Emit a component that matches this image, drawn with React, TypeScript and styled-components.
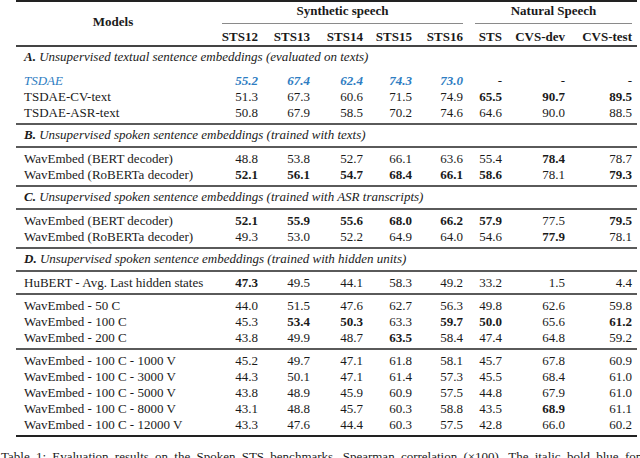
import styled, { createGlobalStyle } from 'styled-components';

const GlobalStyle = createGlobalStyle`
  html, body {
    margin: 0;
    padding: 0;
    background: #fff;
  }
  body {
    font-family: "Liberation Serif", "Times New Roman", serif;
    font-size: 13px;
    line-height: 16px;
    color: #1a1a1a;
  }
`;

const COLS = '194px 53px 52px 53px 49px 51px 39px 63px 67px';

type Row = { name: string; vals: string[]; bold?: number[]; top?: boolean };
type Section = { tag: string; title: string; plain?: boolean; groups: Row[][] };

const heads = ['STS12', 'STS13', 'STS14', 'STS15', 'STS16', 'STS', 'CVS-dev', 'CVS-test'];

const sections: Section[] = [
  {
    tag: 'A.',
    title: 'Unsupervised textual sentence embeddings (evaluated on texts)',
    plain: true,
    groups: [
      [
        { name: 'TSDAE', vals: ['55.2', '67.4', '62.4', '74.3', '73.0', '-', '-', '-'], top: true },
        { name: 'TSDAE-CV-text', vals: ['51.3', '67.3', '60.6', '71.5', '74.9', '65.5', '90.7', '89.5'], bold: [5, 6, 7] },
        { name: 'TSDAE-ASR-text', vals: ['50.8', '67.9', '58.5', '70.2', '74.6', '64.6', '90.0', '88.5'] },
      ],
    ],
  },
  {
    tag: 'B.',
    title: 'Unsupervised spoken sentence embeddings (trained with texts)',
    groups: [
      [
        { name: 'WavEmbed (BERT decoder)', vals: ['48.8', '53.8', '52.7', '66.1', '63.6', '55.4', '78.4', '78.7'], bold: [6] },
        { name: 'WavEmbed (RoBERTa decoder)', vals: ['52.1', '56.1', '54.7', '68.4', '66.1', '58.6', '78.1', '79.3'], bold: [0, 1, 2, 3, 4, 5, 7] },
      ],
    ],
  },
  {
    tag: 'C.',
    title: 'Unsupervised spoken sentence embeddings (trained with ASR transcripts)',
    groups: [
      [
        { name: 'WavEmbed (BERT decoder)', vals: ['52.1', '55.9', '55.6', '68.0', '66.2', '57.9', '77.5', '79.5'], bold: [0, 1, 2, 3, 4, 5, 7] },
        { name: 'WavEmbed (RoBERTa decoder)', vals: ['49.3', '53.0', '52.2', '64.9', '64.0', '54.6', '77.9', '78.1'], bold: [6] },
      ],
    ],
  },
  {
    tag: 'D.',
    title: 'Unsupervised spoken sentence embeddings (trained with hidden units)',
    groups: [
      [
        { name: 'HuBERT - Avg. Last hidden states', vals: ['47.3', '49.5', '44.1', '58.3', '49.2', '33.2', '1.5', '4.4'], bold: [0] },
      ],
      [
        { name: 'WavEmbed - 50 C', vals: ['44.0', '51.5', '47.6', '62.7', '56.3', '49.8', '62.6', '59.8'] },
        { name: 'WavEmbed - 100 C', vals: ['45.3', '53.4', '50.3', '63.3', '59.7', '50.0', '65.6', '61.2'], bold: [1, 2, 4, 5, 7] },
        { name: 'WavEmbed - 200 C', vals: ['43.8', '49.9', '48.7', '63.5', '58.4', '47.4', '64.8', '59.2'], bold: [3] },
      ],
      [
        { name: 'WavEmbed - 100 C - 1000 V', vals: ['45.2', '49.7', '47.1', '61.8', '58.1', '45.7', '67.8', '60.9'] },
        { name: 'WavEmbed - 100 C - 3000 V', vals: ['44.3', '50.1', '47.1', '61.4', '57.3', '45.5', '68.4', '61.0'] },
        { name: 'WavEmbed - 100 C - 5000 V', vals: ['43.8', '48.9', '45.9', '60.9', '57.5', '44.8', '67.9', '61.0'] },
        { name: 'WavEmbed - 100 C - 8000 V', vals: ['43.1', '48.8', '45.7', '60.3', '58.8', '43.5', '68.9', '61.1'], bold: [6] },
        { name: 'WavEmbed - 100 C - 12000 V', vals: ['43.3', '47.6', '44.4', '60.3', '57.5', '42.8', '66.0', '60.2'] },
      ],
    ],
  },
];

export default function App() {
  return (
    <>
      <GlobalStyle />
      <Page>
        <Table>
          <Head>
            <ModelsHead>Models</ModelsHead>
            <GroupHead $span={5} $from={2}>
              <GroupLabel $ml={12}>Synthetic speech</GroupLabel>
            </GroupHead>
            <GroupHead $span={3} $from={7}>
              <GroupLabel $ml={7}>Natural Speech</GroupLabel>
            </GroupHead>
            {heads.map((h) => (
              <ColHead key={h}>{h}</ColHead>
            ))}
          </Head>
          {sections.map((s) => (
            <SectionBlock key={s.tag}>
              <SectionTitle $plain={s.plain}>
                <b>{s.tag}</b> {s.title}
              </SectionTitle>
              {s.groups.map((g, gi) => (
                <Group key={gi}>
                  {g.map((r) => (
                    <DataRow key={r.name}>
                      <Name $top={r.top}>{r.name}</Name>
                      {r.vals.map((v, i) => (
                        <Num
                          key={i}
                          $bold={(r.bold || []).includes(i) || (r.top && v !== '-')}
                          $top={r.top && v !== '-'}
                        >
                          {v}
                        </Num>
                      ))}
                    </DataRow>
                  ))}
                </Group>
              ))}
            </SectionBlock>
          ))}
        </Table>
        <Caption>
          Table 1: Evaluation results on the Spoken STS benchmarks, Spearman correlation (×100). The italic bold blue
          font represents the topline.
        </Caption>
      </Page>
    </>
  );
}

const Page = styled.div`
  width: 640px;
  height: 458px;
  overflow: hidden;
`;

const Table = styled.div`
  margin-left: 16px;
  width: 621px;
  border-top: 2px solid #222;
  border-bottom: 2px solid #222;
`;

const Head = styled.div`
  display: grid;
  grid-template-columns: ${COLS};
  grid-template-rows: 22px 21px;
  border-bottom: 2px solid #444;
  font-weight: bold;
`;

const ModelsHead = styled.div`
  grid-row: 1 / span 2;
  grid-column: 1;
  align-self: center;
  text-align: center;
  padding-bottom: 4px;
`;

const GroupHead = styled.div<{ $span: number; $from: number }>`
  grid-row: 1;
  grid-column: ${(p) => p.$from} / span ${(p) => p.$span};
  padding-top: 1px;
`;

const GroupLabel = styled.div<{ $ml: number }>`
  margin-left: ${(p) => p.$ml}px;
  margin-right: 5px;
  padding-bottom: 4px;
  border-bottom: 1px solid #8a8a8a;
  text-align: center;
`;

const ColHead = styled.div`
  grid-row: 2;
  padding-top: 5px;
  padding-right: 5px;
  text-align: right;
  white-space: nowrap;
`;

const SectionBlock = styled.div`
  &:last-child > div:last-child {
    border-bottom: none;
  }
`;

const SectionTitle = styled.div<{ $plain?: boolean }>`
  padding: 2px 8px 3px;
  font-style: italic;
  white-space: nowrap;
  border-bottom: 2px solid ${(p) => (p.$plain ? 'transparent' : '#5a5a5a')};
`;

const Group = styled.div`
  padding: 3px 0 2px;
  border-bottom: 2px solid #5a5a5a;
`;

const DataRow = styled.div`
  display: grid;
  grid-template-columns: ${COLS};
  height: 16px;
`;

const Name = styled.div<{ $top?: boolean }>`
  padding-left: 8px;
  white-space: nowrap;
  font-style: ${(p) => (p.$top ? 'italic' : 'normal')};
  color: ${(p) => (p.$top ? '#2e7dc2' : 'inherit')};
`;

const Num = styled.div<{ $bold?: boolean; $top?: boolean }>`
  padding-right: 5px;
  text-align: right;
  font-weight: ${(p) => (p.$bold ? 'bold' : 'normal')};
  font-style: ${(p) => (p.$top ? 'italic' : 'normal')};
  color: ${(p) => (p.$top ? '#2e7dc2' : 'inherit')};
`;

const Caption = styled.p`
  margin: 12px 0 0;
  padding-left: 1px;
  white-space: nowrap;
  word-spacing: 3px;
`;
